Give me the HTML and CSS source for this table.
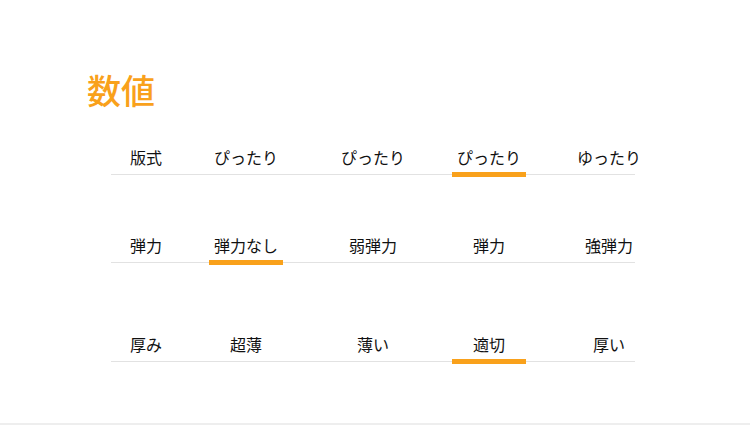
FILE: index.html
```html
<!DOCTYPE html>
<html lang="ja">
<head>
    <meta charset="UTF-8">
    <meta name="viewport" content="width=device-width, initial-scale=1.0">
    <title>数値</title>
    <link rel="stylesheet" href="styles.css">
</head>
<body>
    <div class="page">
        <h1 class="title">数値</h1>

        <div class="spec-row row-first">
            <div class="cell">版式</div>
            <div class="cell">ぴったり</div>
            <div class="cell">ぴったり</div>
            <div class="cell active">ぴったり</div>
            <div class="cell">ゆったり</div>
        </div>

        <div class="spec-row row-second">
            <div class="cell">弾力</div>
            <div class="cell active">弾力なし</div>
            <div class="cell">弱弾力</div>
            <div class="cell">弾力</div>
            <div class="cell">強弾力</div>
        </div>

        <div class="spec-row row-third">
            <div class="cell">厚み</div>
            <div class="cell">超薄</div>
            <div class="cell">薄い</div>
            <div class="cell active">適切</div>
            <div class="cell">厚い</div>
        </div>
    </div>
</body>
</html>
```

FILE: styles.css
```css
body {
    margin: 0;
    padding: 0;
    background-color: #ffffff;
    font-family: "Noto Sans CJK JP", "Noto Sans", sans-serif;
    color: #111111;
}

.page {
    height: 425px;
    border-bottom: 2px solid #eeeeee;
    padding-top: 69px;
    box-sizing: border-box;
    overflow: hidden;
}

.title {
    margin: 0 0 0 87px;
    font-size: 34px;
    line-height: 42px;
    font-weight: 500;
    color: #f9a11b;
}

.spec-row {
    display: flex;
    width: 524px;
    margin-left: 111px;
    border-bottom: 1px solid #e2e2e2;
}

.row-first {
    margin-top: 33px;
}

.row-second {
    margin-top: 57px;
}

.row-third {
    margin-top: 68px;
}

.cell {
    position: relative;
    flex: none;
    text-align: center;
    font-size: 16px;
    line-height: 26px;
    padding-bottom: 4px;
}

.cell:nth-child(1) { width: 70px; }
.cell:nth-child(2) { width: 130px; }
.cell:nth-child(3) { width: 124px; }
.cell:nth-child(4) { width: 108px; }
.cell:nth-child(5) { width: 132px; }

.cell.active::after {
    content: "";
    position: absolute;
    left: 50%;
    bottom: -3px;
    width: 74px;
    height: 5px;
    margin-left: -37px;
    background-color: #f9a11b;
}
```
